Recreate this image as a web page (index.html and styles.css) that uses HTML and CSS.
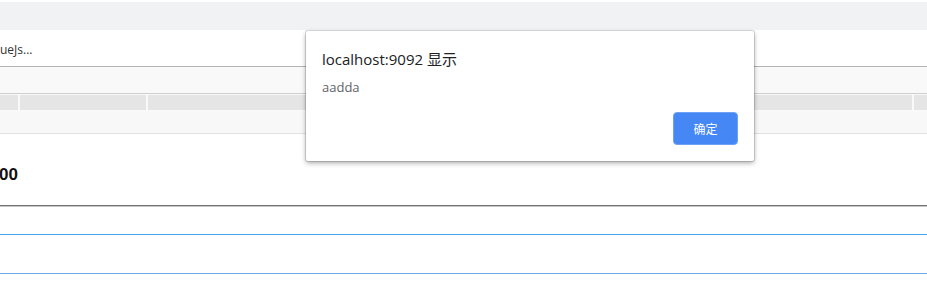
FILE: index.html
```html
<!DOCTYPE html>
<html lang="zh">
<head>
<meta charset="utf-8">
<title>alert</title>
<link rel="stylesheet" href="styles.css">
</head>
<body>
<div class="page">
  <div class="topbar"></div>
  <div class="tabrow"><span class="tabtext">ueJs...</span></div>
  <div class="band1"></div>
  <div class="headrow">
    <div class="cell c1"></div>
    <div class="cell c2"></div>
    <div class="cell c3"></div>
    <div class="cell c4"></div>
  </div>
  <div class="band2"></div>
  <div class="content">
    <div class="num">00</div>
  </div>
  <div class="rule-dark"></div>
  <div class="row-blue first"></div>
  <div class="row-blue second"></div>
</div>
<div class="dialog">
  <div class="dlg-title">localhost:9092 显示</div>
  <div class="dlg-msg">aadda</div>
  <div class="dlg-actions"><button class="dlg-btn">确定</button></div>
</div>
</body>
</html>
```
FILE: styles.css
```css
html, body {
  margin: 0;
  padding: 0;
  background: #fff;
  font-family: "Segoe UI", "Open Sans", "Noto Sans CJK SC", sans-serif;
  overflow: hidden;
}
.page {
  width: 927px;
  height: 281px;
}
.topbar {
  margin-top: 2px;
  height: 28px;
  background: #f1f2f4;
}
.tabrow {
  height: 36px;
  display: flex;
  align-items: center;
  border-bottom: 1px solid #b4b4b4;
}
.tabtext {
  font-size: 12px;
  color: #333;
  margin-top: 2px;
}
.band1 {
  height: 26px;
  background: #f9f9f9;
  border-bottom: 1px solid #cfcfcf;
}
.headrow {
  display: flex;
  height: 17px;
  padding-top: 1px;
  background: #f9f9f9;
}
.cell {
  background: #e5e5e5;
  height: 15px;
  margin-right: 2px;
}
.c1 { width: 18px; }
.c2 { width: 126px; }
.c3 { width: 764px; }
.c4 { flex: 1; margin-right: 0; }
.band2 {
  height: 21px;
  background: #f8f8f8;
  border-bottom: 1px solid #e2e2e2;
}
.content {
  height: 71px;
  display: flex;
  align-items: center;
}
.num {
  font-family: "Liberation Sans", Arial, sans-serif;
  font-weight: bold;
  font-size: 17px;
  color: #111;
  margin-left: -1px;
  margin-top: 10px;
}
.rule-dark {
  height: 0;
  border-top: 1px solid #707070;
  border-bottom: 1px solid #c8c8c8;
}
.row-blue {
  border-bottom: 1px solid #4ba3f5;
}
.row-blue.first {
  height: 27px;
}
.row-blue.second {
  height: 38px;
  border-bottom-color: #6aa8e6;
}
.dialog {
  position: absolute;
  left: 306px;
  top: 31px;
  width: 448px;
  height: 130px;
  box-sizing: border-box;
  background: #fff;
  border-radius: 2px;
  box-shadow: 0 0 0 1px rgba(0,0,0,0.12), 0 2px 5px rgba(0,0,0,0.35);
  padding: 16px 16px 0 16px;
}
.dlg-title {
  font-size: 15px;
  color: #202124;
  line-height: 24px;
}
.dlg-msg {
  margin-top: 6px;
  font-size: 13px;
  color: #5f6368;
  line-height: 20px;
}
.dlg-actions {
  display: flex;
  justify-content: flex-end;
  margin-top: 15px;
}
.dlg-btn {
  width: 65px;
  height: 33px;
  background: #4587f5;
  border: 1px solid #6ea2f7;
  border-radius: 4px;
  color: #fff;
  font-size: 12px;
  font-family: "Noto Sans CJK SC", sans-serif;
  padding: 0;
}
```
